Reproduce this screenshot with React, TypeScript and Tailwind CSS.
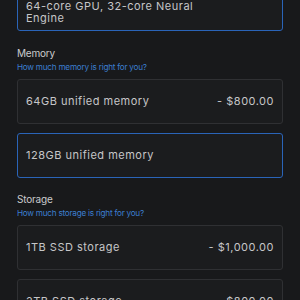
const memory = [
  { label: "64GB unified memory", price: "- $800.00", selected: false },
  { label: "128GB unified memory", price: "", selected: true },
]

const storage = [
  { label: "1TB SSD storage", price: "- $1,000.00", selected: false },
  { label: "2TB SSD storage", price: "- $800.00", selected: false },
]

function Option({ label, price, selected }: { label: string; price: string; selected: boolean }) {
  return (
    <div
      className={`flex items-center justify-between h-[45px] px-[8px] rounded-[3px] border ${
        selected ? "border-[#2a64b8]" : "border-[#2f3033]"
      } bg-[#1b1c1e]`}
    >
      <span>{label}</span>
      <span>{price}</span>
    </div>
  )
}

function Section({ title, link, items, top }: { title: string; link: string; items: typeof memory; top: string }) {
  return (
    <div className="flex flex-col">
      <h3 className={`text-[10px] leading-[14px] tracking-[-0.2px] text-[#cbcbcd] ${top}`}>{title}</h3>
      <a className="text-[8.2px] leading-[12px] tracking-[-0.25px] text-[#3c7fd0] mt-[1px]">{link}</a>
      <div className="flex flex-col gap-[9px] mt-[6px]">
        {items.map((item, index) => (
          <Option key={index} {...item} />
        ))}
      </div>
    </div>
  )
}

export default function App() {
  return (
    <div
      className="w-[300px] h-[300px] overflow-hidden bg-[#18191b] text-[#c6c6c8] text-[11px] tracking-[0.5px] px-[17px]"
      style={{ fontFamily: "Inter, 'Noto Sans', sans-serif" }}
    >
      {/* chip card, cut off at the top */}
      <div className="-mt-[20px] pt-[19px] pb-[6px] px-[8px] border border-[#2a64b8] rounded-[3px] bg-[#1b1c1e] leading-[12px]">
        <p>64-core GPU, 32-core Neural</p>
        <p>Engine</p>
      </div>

      <Section title="Memory" link="How much memory is right for you?" items={memory} top="mt-[15px]" />
      <Section title="Storage" link="How much storage is right for you?" items={storage} top="mt-[14px]" />
    </div>
  )
}
